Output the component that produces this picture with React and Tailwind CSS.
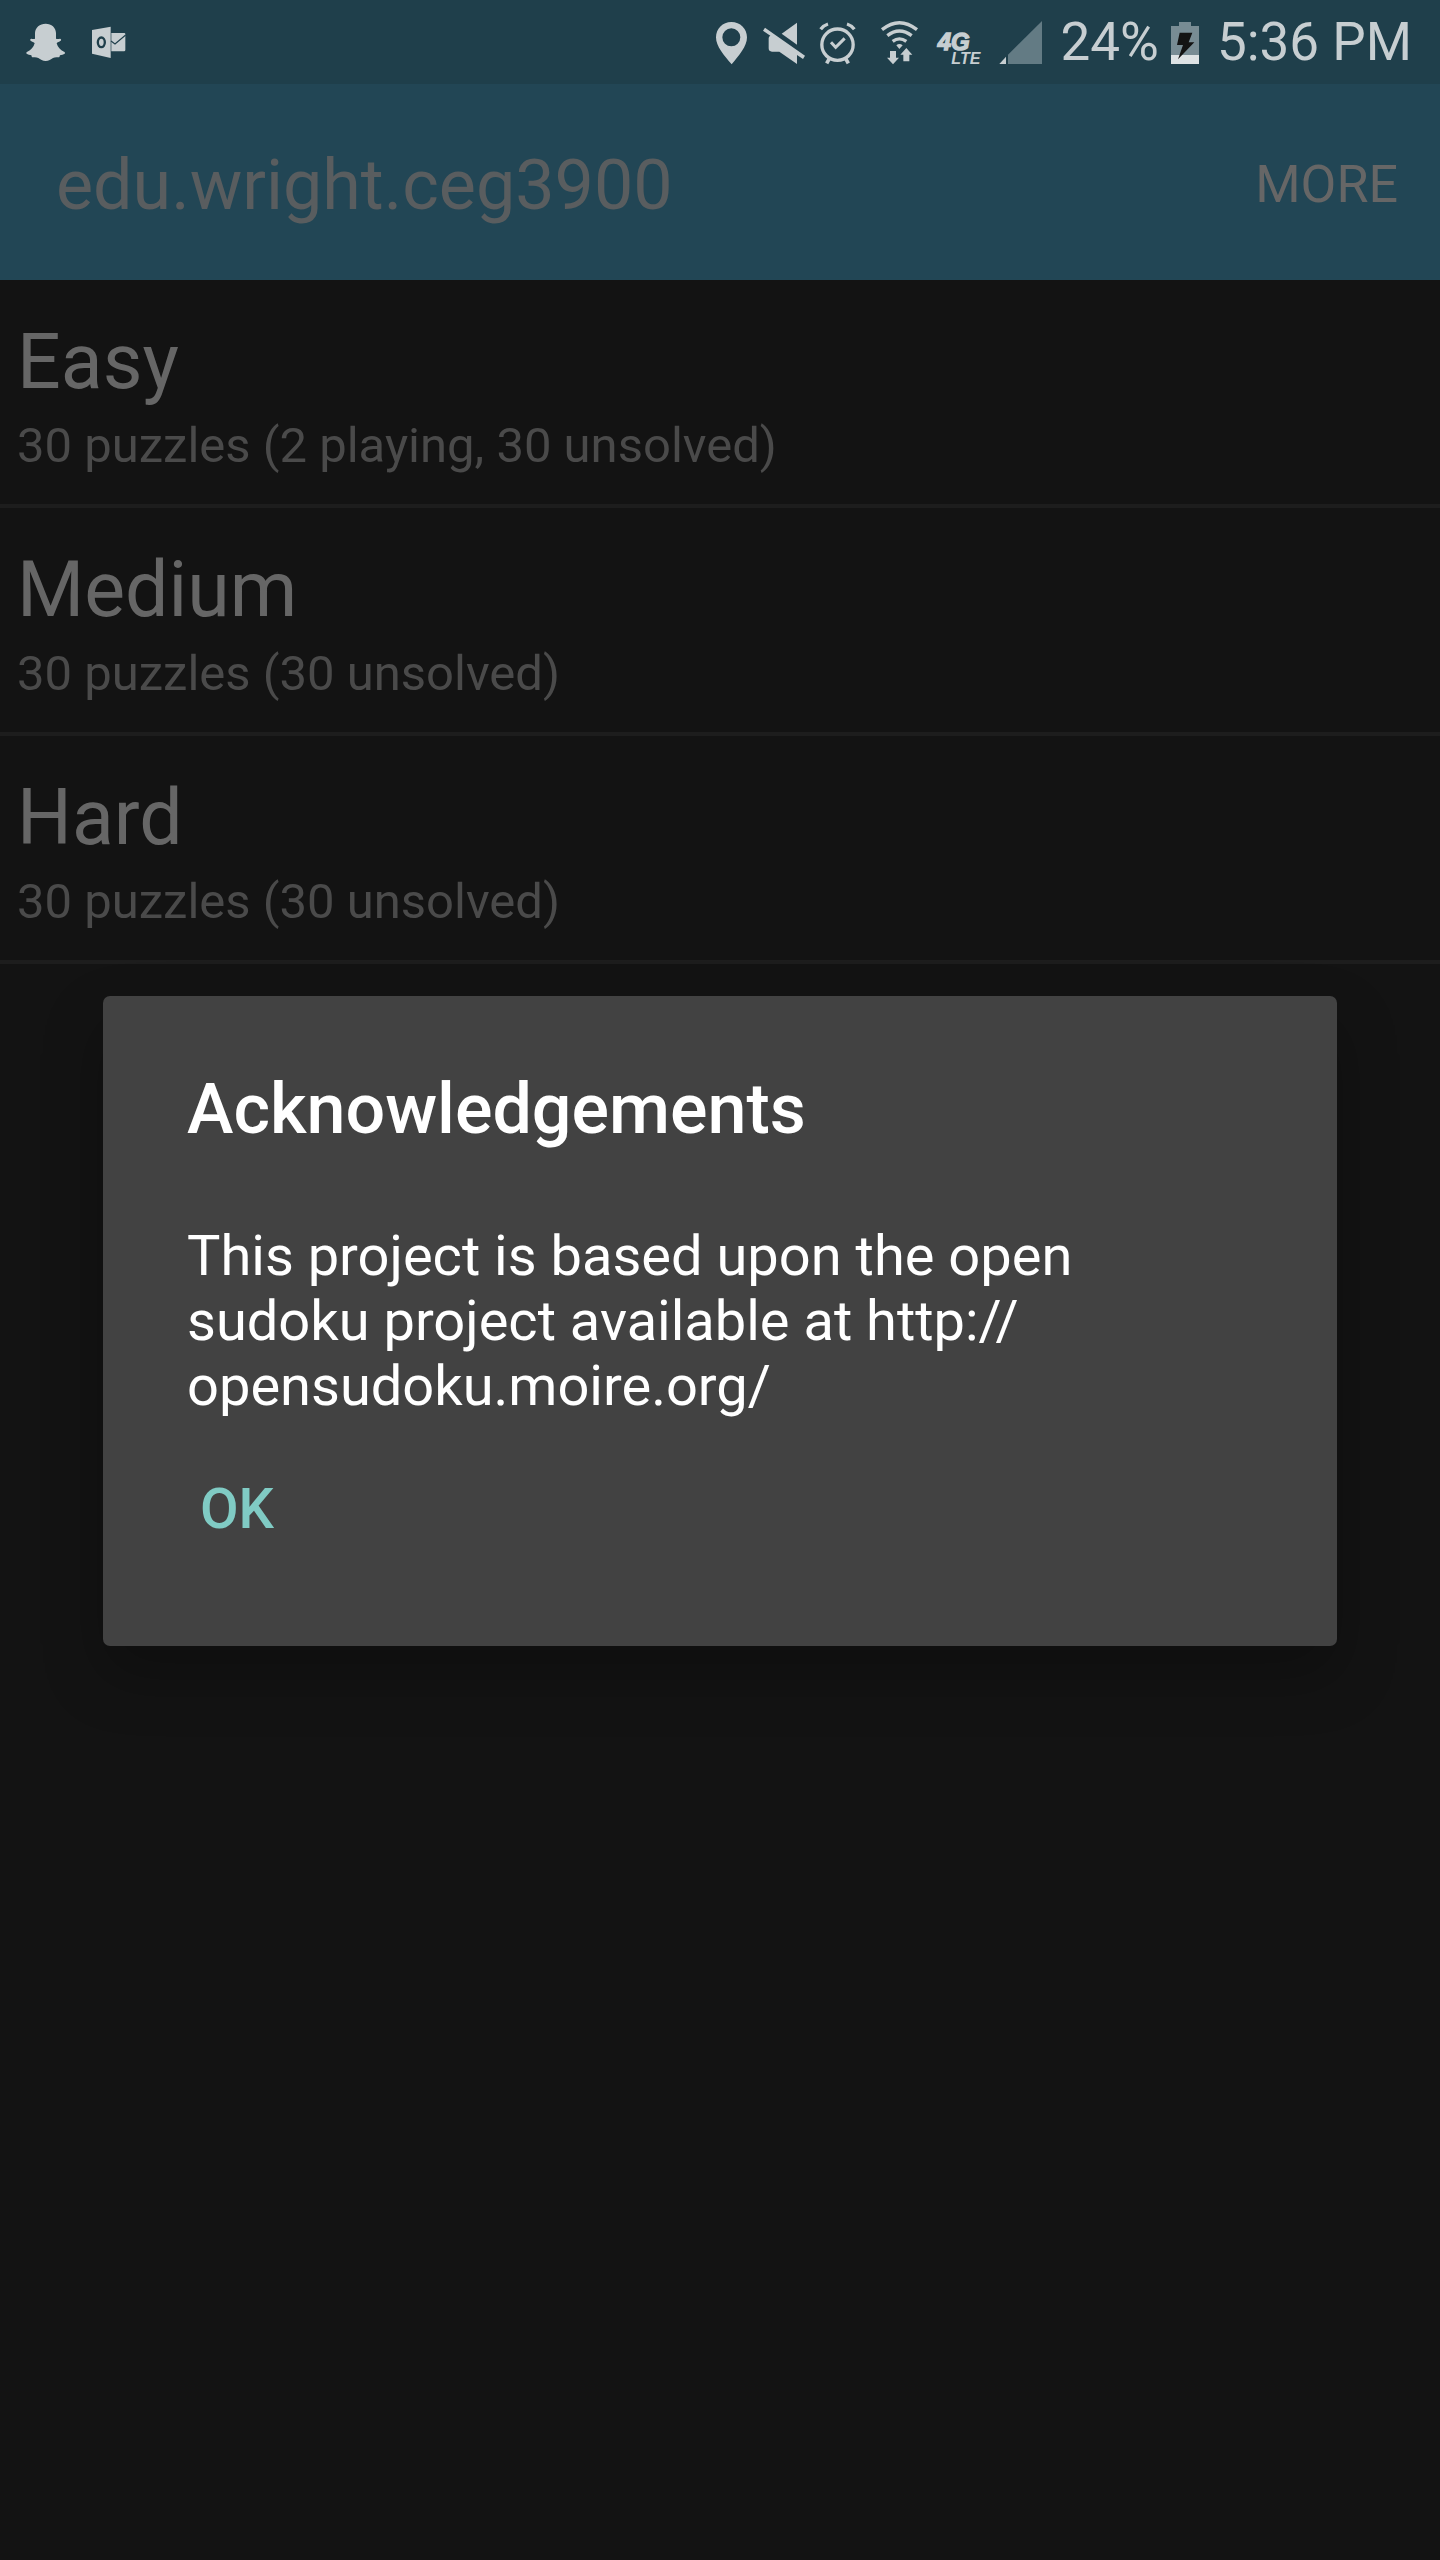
import React from "react";

const puzzleFolders = [
  { name: "Easy", detail: "30 puzzles (2 playing, 30 unsolved)" },
  { name: "Medium", detail: "30 puzzles (30 unsolved)" },
  { name: "Hard", detail: "30 puzzles (30 unsolved)" },
];

function SnapchatIcon() {
  return (
    <svg viewBox="75 60 123 126" className="h-[42px] w-[41px]" fill="currentColor" role="img" aria-label="Snapchat">
      <path d="M137 68c18 0 30 11 31 28v17c4 2 9 1 12 0 3 0 5 4 2 6-4 3-10 4-12 8 3 11 11 21 22 25 3 1 4 4 2 6-3 3-10 3-14 5-1 2-1 5-3 6-6 0-13-1-18 2-6 4-13 9-22 9s-16-5-22-9c-5-3-12-2-18-2-2-1-2-4-3-6-4-2-11-2-14-5-2-2-1-5 2-6 11-4 19-14 22-25-2-4-8-5-12-8-3-2-1-6 2-6 3 1 8 2 11 0V96c1-17 14-28 32-28z" />
    </svg>
  );
}

function OutlookIcon() {
  return (
    <svg viewBox="273 60 105 126" className="h-[42px] w-[35px]" role="img" aria-label="Outlook">
      <path fill="currentColor" d="M276 87l56-10v94l-56-13z" />
      <path fill="currentColor" d="M334 96h39q3 0 3 3v48q0 4-4 4h-38z" />
      <path fill="none" stroke="#1f3f4b" strokeWidth="3.5" d="M333 120l12 9 32-27" />
      <ellipse cx="304" cy="124" rx="10.500" ry="14.500" fill="none" stroke="#1f3f4b" strokeWidth="7" />
    </svg>
  );
}

function LocationIcon() {
  return (
    <svg viewBox="36 54 132 135" className="h-[45px] w-[44px]" fill="currentColor" role="img" aria-label="Location on">
      <path fillRule="evenodd" d="M97 60c27 0 47 20 47 46 0 27-24 54-46 81-23-27-47-54-47-81 0-26 20-46 46-46zm0 19a27 27 0 1 0 0 54 27 27 0 0 0 0-54z" />
    </svg>
  );
}

function MutedIcon() {
  return (
    <svg viewBox="168 54 168 135" className="h-[45px] w-[56px]" fill="currentColor" role="img" aria-label="Sound off">
      <path d="M294 62v66l-46-33z" />
      <path d="M198 77l120 84-6 10-18-12v27l-53-37h-22q-10 0-10-10v-30q0-6 5-8l-22-15z" />
    </svg>
  );
}

function AlarmIcon() {
  return (
    <svg viewBox="336 54 171 135" className="h-[45px] w-[57px]" fill="none" stroke="currentColor" role="img" aria-label="Alarm set">
      <circle cx="415.500" cy="128" r="47" strokeWidth="10" />
      <path strokeWidth="9" d="M396 121l14 15 27-27" />
      <path strokeWidth="10" d="M365 82q9-12 22-16M466 82q-9-12-22-16" />
      <path strokeWidth="11" d="M391 170l-8 14M440 170l8 14" />
    </svg>
  );
}

function WifiIcon() {
  return (
    <svg viewBox="507 54 189 135" className="h-[45px] w-[63px]" role="img" aria-label="Wi-Fi">
      <g fill="none" stroke="currentColor" strokeWidth="10">
        <path d="M549 83q52-42 105 0" />
        <path d="M565 101q36-28 73 0" />
        <path d="M581 118q20-15 41 0" />
      </g>
      <path fill="currentColor" d="M592 130q9-8 19 0l-10 11z" />
      <path fill="currentColor" d="M573 147h18v20h9l-18 20-18-20h9z" />
      <path fill="currentColor" d="M613 178v-20h-9l18-20 18 20h-9v20z" />
    </svg>
  );
}

function LteIcon() {
  return (
    <svg viewBox="36 54 174 135" className="h-[45px] w-[58px] overflow-visible font-['Liberation_Sans',Arial,sans-serif] font-bold italic" fill="currentColor" stroke="currentColor" role="img" aria-label="4G LTE">
      <text>
        <tspan x="56" y="144" fontSize="72" strokeWidth="4">4G</tspan>
        <tspan x="97" y="187" fontSize="48" strokeWidth="0">LTE</tspan>
      </text>
    </svg>
  );
}

function SignalIcon() {
  return (
    <svg viewBox="210 54 180 135" className="h-[45px] w-[60px]" fill="currentColor" role="img" aria-label="Mobile signal">
      <path d="M241 186l20-22v22z" />
      <path fill="#637b84" d="M267 158L369 57v129H267z" />
    </svg>
  );
}

function BatteryIcon() {
  return (
    <svg viewBox="93 54 84 135" className="h-[45px] w-7" role="img" aria-label="Battery charging">
      <path fill="#788c94" d="M93 72h24V60h36v12h24v87H93z" />
      <path fill="#dde2e4" d="M93 159h84v27H93z" />
      <path fill="#131313" d="M119 92h38l-11 29h17l-49 51 15-43h-18z" />
    </svg>
  );
}

function StatusBar() {
  return (
    <div className="flex h-[84px] items-center justify-between bg-[#1f3f4b] pl-[25px] pr-7 text-[53px] leading-[62px] text-[#c7ced1]">
      <div className="flex items-center gap-[25px]">
        <SnapchatIcon />
        <OutlookIcon />
      </div>
      <div className="flex items-center">
        <LocationIcon />
        <MutedIcon />
        <AlarmIcon />
        <WifiIcon />
        <LteIcon />
        <SignalIcon />
        <span className="mx-3">24%</span>
        <BatteryIcon />
        <time className="ml-[18px] whitespace-nowrap">5:36 PM</time>
      </div>
    </div>
  );
}

function AppBar() {
  return (
    <header className="flex h-[196px] items-center justify-between bg-[#224655] pl-14 pr-[42px] pt-[6px]">
      <h1 className="text-[70px] leading-[82px] text-[#595d5f]">edu.wright.ceg3900</h1>
      <button type="button" className="text-[52px] leading-[62px] text-[#666666]">MORE</button>
    </header>
  );
}

function FolderList() {
  return (
    <ul>
      {puzzleFolders.map(({ name, detail }) => (
        <li key={name} className="border-b-4 border-[#1d1d1d]">
          <button type="button" className="block w-full px-[17px] pb-[30px] pt-[37px] text-left">
            <span className="block text-[77px] leading-[90px] text-[#666666]">{name}</span>
            <span className="mt-[10px] block text-[49px] leading-[57px] text-[#4a4a4a]">{detail}</span>
          </button>
        </li>
      ))}
    </ul>
  );
}

function AcknowledgementsDialog() {
  return (
    <div className="absolute inset-x-0 bottom-0 top-[82px] flex items-center px-[103px]">
      <section
        role="dialog"
        aria-modal="true"
        aria-labelledby="dialog-title"
        className="w-full rounded-[7px] bg-[#424242] px-[84px] pb-[53px] pt-[72px] text-white shadow-[0_28px_60px_rgba(0,0,0,0.25)]"
      >
        <h2 id="dialog-title" className="text-[70px] font-medium leading-[82px]">Acknowledgements</h2>
        <p className="mt-[74px] text-[56px] leading-[65px]">
          This project is based upon the open
          <br />
          sudoku project available at http://
          <br />
          opensudoku.moire.org/
        </p>
        <button type="button" className="mt-[6px] h-[168px] px-[13px] text-[56px] font-medium leading-[65px] text-[#80cbc4]">
          OK
        </button>
      </section>
    </div>
  );
}

export default function App() {
  return (
    <div className="relative min-h-screen bg-[#131313] font-[Roboto,sans-serif]">
      <StatusBar />
      <AppBar />
      <FolderList />
      <AcknowledgementsDialog />
    </div>
  );
}
